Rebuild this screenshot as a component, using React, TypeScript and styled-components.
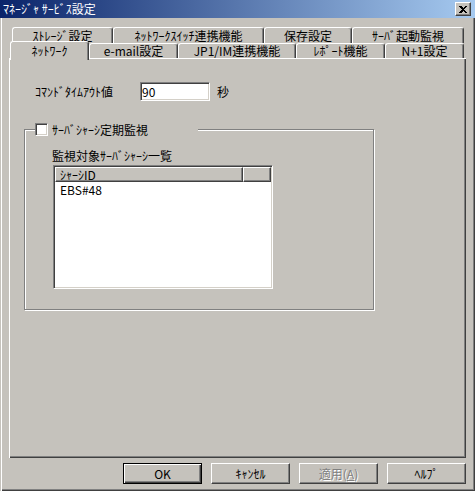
import React from "react";
import styled, { createGlobalStyle, css } from "styled-components";

const FACE = "#c5c2bc";

const GlobalStyle = createGlobalStyle`
  html, body { margin: 0; padding: 0; background: ${FACE}; }
  body {
    font-family: "Noto Sans CJK JP", "Noto Sans", sans-serif;
    font-size: 12px;
    line-height: 14px;
    color: #000;
  }
  * { box-sizing: border-box; }
`;

const Window = styled.div`
  width: 475px;
  height: 491px;
  display: flex;
  flex-direction: column;
  background: ${FACE};
  overflow: hidden;
`;

const TitleBar = styled.div`
  height: 18px;
  flex: none;
  display: flex;
  align-items: center;
  justify-content: space-between;
  padding: 0 4px 0 3px;
  background: linear-gradient(to right, #0a246a, #a6caf0);
  color: #fff;
`;

const TitleText = styled.span`
  line-height: 18px;
  white-space: nowrap;
`;

const CloseButton = styled.button`
  width: 16px;
  height: 14px;
  padding: 0;
  margin: 0;
  background: ${FACE};
  border: 1px solid;
  border-color: #fff #404040 #404040 #fff;
  box-shadow: inset -1px -1px #808080;
  display: flex;
  align-items: center;
  justify-content: center;
`;

const Frame = styled.div`
  flex: 1;
  display: flex;
  flex-direction: column;
  padding: 9px 9px 0 9px;
  box-shadow: inset 1px 0 ${FACE}, inset 2px 0 #fff, inset -1px -1px #404040,
    inset -2px -2px #808080;
`;

const TabStrip = styled.div`
  display: flex;
  flex-direction: column;
  margin-left: 3px;
  width: 452px;
`;

const TabRow = styled.div<{ $h: number }>`
  display: flex;
  height: ${(p) => p.$h}px;
`;

const Tab = styled.div<{ $w: number; $active?: boolean }>`
  flex: none;
  width: ${(p) => p.$w}px;
  height: 100%;
  display: flex;
  align-items: center;
  justify-content: center;
  white-space: nowrap;
  background: ${FACE};
  border-top: 1px solid #fff;
  border-left: 1px solid #fff;
  border-right: 1px solid #404040;
  box-shadow: inset -1px 0 #808080;
  border-radius: 3px 3px 0 0;
  ${(p) =>
    p.$active &&
    css`
      position: relative;
      z-index: 1;
      width: ${p.$w + 2}px;
      height: 19px;
      margin: -2px 0 -2px -2px;
    `}
`;

const Panel = styled.div`
  height: 400px;
  flex: none;
  padding: 24px 0 0 15px;
  box-shadow: inset 1px 1px #fff, inset -1px -1px #404040, inset -2px -2px #808080;
`;

const FieldRow = styled.div`
  display: flex;
  align-items: center;
  height: 19px;
  margin-left: 11px;
`;

const FieldLabel = styled.span`
  width: 105px;
  white-space: nowrap;
`;

const TextInput = styled.input`
  width: 70px;
  height: 19px;
  padding: 0 0 0 1px;
  margin: 0;
  font: inherit;
  color: #000;
  background: #fff;
  border: 1px solid;
  border-color: #808080 #fff #fff #808080;
  box-shadow: inset 1px 1px #404040, inset -1px -1px #d4d0c8;
  outline: none;
`;

const Unit = styled.span`
  margin-left: 7px;
`;

const GroupBox = styled.div`
  width: 350px;
  margin-top: 28px;
  padding: 0 0 20px 0;
  border: 1px solid #808080;
  box-shadow: inset 1px 1px #fff, 1px 1px #fff;
`;

const Legend = styled.label`
  display: flex;
  align-items: center;
  width: 163px;
  height: 13px;
  margin: -7px 0 0 10px;
  background: ${FACE};
  white-space: nowrap;
`;

const CheckBox = styled.span`
  width: 13px;
  height: 13px;
  flex: none;
  background: #fff;
  border: 1px solid;
  border-color: #808080 #fff #fff #808080;
  box-shadow: inset 1px 1px #404040, inset -1px -1px #d4d0c8;
`;

const LegendText = styled.span`
  margin-left: 4px;
`;

const ListCaption = styled.div`
  margin: 13px 0 0 27px;
  line-height: 14px;
  white-space: nowrap;
`;

const ListView = styled.div`
  width: 220px;
  height: 124px;
  margin: 2px 0 0 28px;
  padding: 1px;
  background: #fff;
  display: flex;
  flex-direction: column;
  border: 1px solid;
  border-color: #808080 #fff #fff #808080;
  box-shadow: inset 1px 1px #404040, inset -1px -1px #d4d0c8;
`;

const ListHeader = styled.div`
  display: flex;
  height: 15px;
  flex: none;
`;

const HeaderCell = styled.div<{ $w?: number }>`
  height: 15px;
  background: ${FACE};
  padding-left: 4px;
  display: flex;
  align-items: center;
  line-height: 13px;
  white-space: nowrap;
  border: 1px solid;
  border-color: #fff #404040 #404040 #fff;
  box-shadow: inset -1px -1px #808080;
  ${(p) => (p.$w ? `width: ${p.$w}px; flex: none;` : `flex: 1;`)}
`;

const ListRow = styled.div`
  height: 14px;
  line-height: 14px;
  margin-top: 1px;
  padding-left: 5px;
  white-space: nowrap;
`;

const ButtonBar = styled.div`
  display: flex;
  justify-content: flex-end;
  gap: 9px;
  margin-top: 5px;
`;

const DialogButton = styled.button<{ $default?: boolean }>`
  width: 79px;
  height: 21px;
  padding: 0;
  margin: 0;
  font: inherit;
  line-height: 14px;
  color: #000;
  background: ${FACE};
  border: 1px solid;
  border-color: #fff #404040 #404040 #fff;
  box-shadow: inset -1px -1px #808080;
  white-space: nowrap;
  ${(p) =>
    p.$default &&
    css`
      border-color: #000;
      box-shadow: inset 1px 1px #fff, inset -1px -1px #404040, inset -2px -2px #808080;
    `}
  &:disabled {
    color: #808080;
    text-shadow: 1px 1px 0 #fff;
  }
`;

const row1 = [
  { label: "ｽﾄﾚｰｼﾞ設定", w: 101 },
  { label: "ﾈｯﾄﾜｰｸｽｲｯﾁ連携機能", w: 151 },
  { label: "保存設定", w: 88 },
  { label: "ｻｰﾊﾞ起動監視", w: 112 },
];

const row2 = [
  { label: "ﾈｯﾄﾜｰｸ", w: 77, active: true },
  { label: "e-mail設定", w: 89 },
  { label: "JP1/IM連携機能", w: 118 },
  { label: "ﾚﾎﾟｰﾄ機能", w: 89 },
  { label: "N+1設定", w: 79 },
];

export default function App() {
  return (
    <>
      <GlobalStyle />
      <Window>
        <TitleBar>
          <TitleText>ﾏﾈｰｼﾞｬ ｻｰﾋﾞｽ設定</TitleText>
          <CloseButton aria-label="close">
            <svg width="8" height="7" viewBox="0 0 8 7" shapeRendering="crispEdges">
              <path
                d="M0 0h2l2 2 2-2h2L5 3.5 8 7H6L4 5 2 7H0l3-3.5z"
                fill="#000"
              />
            </svg>
          </CloseButton>
        </TitleBar>
        <Frame>
          <TabStrip>
            <TabRow $h={16}>
              {row1.map((t) => (
                <Tab key={t.label} $w={t.w}>
                  {t.label}
                </Tab>
              ))}
            </TabRow>
            <TabRow $h={15}>
              {row2.map((t) => (
                <Tab key={t.label} $w={t.w} $active={t.active}>
                  {t.label}
                </Tab>
              ))}
            </TabRow>
          </TabStrip>
          <Panel>
            <FieldRow>
              <FieldLabel>ｺﾏﾝﾄﾞﾀｲﾑｱｳﾄ値</FieldLabel>
              <TextInput defaultValue="90" />
              <Unit>秒</Unit>
            </FieldRow>
            <GroupBox>
              <Legend>
                <CheckBox />
                <LegendText>ｻｰﾊﾞｼｬｰｼ定期監視</LegendText>
              </Legend>
              <ListCaption>監視対象ｻｰﾊﾞｼｬｰｼ一覧</ListCaption>
              <ListView>
                <ListHeader>
                  <HeaderCell $w={188}>ｼｬｰｼID</HeaderCell>
                  <HeaderCell />
                </ListHeader>
                <ListRow>EBS#48</ListRow>
              </ListView>
            </GroupBox>
          </Panel>
          <ButtonBar>
            <DialogButton $default>OK</DialogButton>
            <DialogButton>ｷｬﾝｾﾙ</DialogButton>
            <DialogButton disabled>
              適用(<u>A</u>)
            </DialogButton>
            <DialogButton>ﾍﾙﾌﾟ</DialogButton>
          </ButtonBar>
        </Frame>
      </Window>
    </>
  );
}
